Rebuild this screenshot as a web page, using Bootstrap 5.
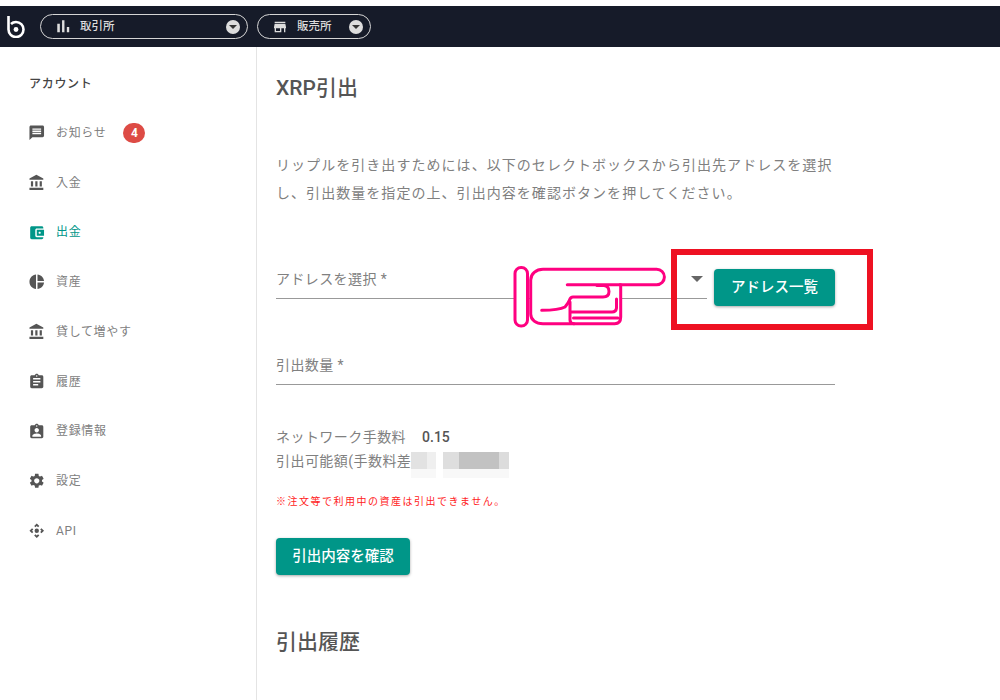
<!DOCTYPE html>
<html lang="ja">
<head>
<meta charset="UTF-8">
<title>XRP引出</title>
<link href="https://cdn.jsdelivr.net/npm/bootstrap@5.3.3/dist/css/bootstrap.min.css" rel="stylesheet">
<style>
body { font-family: Roboto, "Noto Sans CJK JP", sans-serif; background: #fff; padding-top: 6px; height: 700px; overflow: hidden; color: #808080; }
.top-bar { height: 41px; background: #161b29; padding-left: 7px; }
.logo-mark { width: 18px; height: 23px; margin-right: 15px; }
.market-pill { height: 25px; border: 1px solid #d5d5d5; border-radius: 13px; color: #ddd; font-size: 11.5px; font-weight: 500; padding: 0 7px 0 14px; }
.pill-wide { width: 208px; margin-right: 9px; }
.pill-short { width: 114px; }
.pill-icon { width: 16px; height: 16px; fill: #ddd; margin-right: 9px; flex: none; }
.pill-icon-bars { width: 20.5px; height: 20.5px; margin-left: -2.3px; margin-right: 6.8px; }
.pill-arrow { width: 14px; height: 14px; border-radius: 50%; background: #ddd; margin-left: auto; }
.pill-arrow::after { content: ""; border: 4px solid transparent; border-top: 4px solid #333; border-bottom: 0; }
.page-body { height: 653px; }
.side-menu { width: 257px; border-right: 1px solid #e4e4e4; padding: 28px 0 0 29px; flex: none; }
.side-title { font-size: 12px; font-weight: 500; letter-spacing: .7px; color: #444; height: 18px; line-height: 18px; margin-bottom: 15px; }
.side-item { height: 49.75px; font-size: 12px; letter-spacing: .65px; color: #808080; }
.side-item svg { width: 17.5px; height: 17.5px; fill: #555; margin-left: -1.5px; margin-right: 11px; flex: none; }
.side-item.is-current { color: #009688; }
.side-item.is-current svg { fill: #009688; }
.count-badge { width: 22px; height: 20px; border-radius: 10px; background: #dd4b45; color: #fff; font-size: 12px; font-weight: 700; margin-left: 17px; letter-spacing: 0; }
.main-pane { padding-left: 19px; width: 598px; flex: none; }
.page-heading { font-size: 21px; font-weight: 500; color: #555; line-height: 30px; margin: 0; }
.title-top { margin-top: 26px; }
.intro-text { font-size: 14px; letter-spacing: 1.05px; line-height: 28px; color: #808080; margin: 48px 0 0; width: 570px; }
.addr-row { margin-top: 62px; height: 78px; }
.addr-field { width: 431px; height: 39px; border-bottom: 1px solid #999; font-size: 14px; letter-spacing: .4px; margin-top: -9px; margin-right: 7px; }
.drop-caret { position: absolute; left: 415px; top: 7px; border: 6px solid transparent; border-top: 6px solid #666; border-bottom: 0; }
.teal-btn { background: #009688; color: #fff; border: 0; border-radius: 4px; font-size: 14.5px; font-weight: 500; height: 37px; box-shadow: 0 1px 3px rgba(0,0,0,.35); padding: 0; }
.teal-btn:hover { background: #00897b; color: #fff; }
.list-btn { width: 121px; }
.amount-field { width: 559px; height: 38px; border-bottom: 1px solid #999; font-size: 14px; letter-spacing: .4px; }
.info-block { margin-top: 40px; font-size: 14px; letter-spacing: .45px; line-height: 24px; }
.info-val { font-weight: 500; color: #555; margin-left: 16px; letter-spacing: 0; }
.blur-one, .blur-two { display: inline-block; height: 26px; vertical-align: top; margin-top: 3px; margin-bottom: -5px; background-repeat: no-repeat; background-size: 100% 17px, 100% 100%; }
.blur-one { width: 25px; background-image: linear-gradient(90deg, #e2e2e2 0 16px, #efefef 16px), linear-gradient(#f8f8f8, #f8f8f8); }
.blur-two { width: 66px; margin-left: 7px; background-image: linear-gradient(90deg, #dedede 0 16px, #c2c2c2 16px 56px, #dcdcdc 56px), linear-gradient(#f8f8f8, #f8f8f8); }
.warn-text { font-size: 10px; letter-spacing: 1.5px; color: #f22; margin: 21px 0 0; line-height: 16px; }
.confirm-btn { width: 134px; margin-top: 28px; display: block; }
.history-heading { margin-top: 52px; }
.red-frame { position: absolute; left: 414px; top: 202px; width: 202px; height: 81px; border: 6px solid #ee1122; }
.hand-mark { position: absolute; left: 256px; top: 219px; width: 155px; height: 62px; fill: #fff; stroke: #ff0080; stroke-width: 3; }
</style>
</head>
<body>

<nav class="top-bar d-flex align-items-center">
    <svg class="logo-mark" viewBox="0 0 18 23" fill="none" stroke="#fff" stroke-width="2.6">
        <path d="M1.500 1v13.500a7.500 7.500 0 1 0 7.500-7.500c-2 0-3.800 .8-5 2"/>
        <circle cx="9" cy="14.500" r="2.400" fill="#fff" stroke="none"/>
    </svg>
    <div class="market-pill pill-wide d-flex align-items-center">
        <svg class="pill-icon pill-icon-bars" viewBox="0 0 24 24"><path d="M5 9.200h3V19H5zM10.600 5h2.800v14h-2.800zm5.600 8H19v6h-2.800z"/></svg>
        <span>取引所</span>
        <span class="pill-arrow d-flex align-items-center justify-content-center"></span>
    </div>
    <div class="market-pill pill-short d-flex align-items-center">
        <svg class="pill-icon" viewBox="0 0 24 24"><path d="M20 4H4v2h16V4zm1 10v-2l-1-5H4l-1 5v2h1v6h10v-6h4v6h2v-6h1zm-9 4H6v-4h6v4z"/></svg>
        <span>販売所</span>
        <span class="pill-arrow d-flex align-items-center justify-content-center"></span>
    </div>
</nav>

<div class="page-body d-flex">
    <aside class="side-menu">
        <div class="side-title">アカウント</div>
        <div class="side-item d-flex align-items-center">
            <svg viewBox="0 0 24 24"><path d="M20 2H4c-1.100 0-1.990.9-1.990 2L2 22l4-4h14c1.100 0 2-.9 2-2V4c0-1.100-.9-2-2-2zm-2 12H6v-2h12v2zm0-3H6V9h12v2zm0-3H6V6h12v2z"/></svg>
            <span>お知らせ</span>
            <span class="count-badge d-flex align-items-center justify-content-center">4</span>
        </div>
        <div class="side-item d-flex align-items-center">
            <svg viewBox="0 0 24 24"><path d="M4 10v7h3v-7H4zm6 0v7h3v-7h-3zM2 22h19v-3H2v3zm14-12v7h3v-7h-3zm-4.500-9L2 6v2h19V6l-9.500-5z"/></svg>
            <span>入金</span>
        </div>
        <div class="side-item is-current d-flex align-items-center">
            <svg viewBox="0 0 24 24"><path d="M21 18v1c0 1.100-.9 2-2 2H5c-1.110 0-2-.9-2-2V5c0-1.100.89-2 2-2h14c1.100 0 2 .9 2 2v1h-9c-1.110 0-2 .9-2 2v8c0 1.100.89 2 2 2h9zm-9-2h10V8H12v8zm4-2.500c-.83 0-1.500-.67-1.500-1.500s.67-1.500 1.500-1.500 1.500.67 1.500 1.500-.67 1.500-1.500 1.500z"/></svg>
            <span>出金</span>
        </div>
        <div class="side-item d-flex align-items-center">
            <svg viewBox="0 0 24 24"><path d="M11 2v20c-5.070-.5-9-4.790-9-10s3.930-9.500 9-10zm2.030 0v8.990H22c-.47-4.740-4.240-8.520-8.970-8.990zm0 11.010V22c4.740-.47 8.500-4.250 8.970-8.990h-8.970z"/></svg>
            <span>資産</span>
        </div>
        <div class="side-item d-flex align-items-center">
            <svg viewBox="0 0 24 24"><path d="M4 10v7h3v-7H4zm6 0v7h3v-7h-3zM2 22h19v-3H2v3zm14-12v7h3v-7h-3zm-4.500-9L2 6v2h19V6l-9.500-5z"/></svg>
            <span>貸して増やす</span>
        </div>
        <div class="side-item d-flex align-items-center">
            <svg viewBox="0 0 24 24"><path d="M19 3h-4.180C14.400 1.840 13.300 1 12 1c-1.300 0-2.400.84-2.820 2H5c-1.100 0-2 .9-2 2v14c0 1.100.9 2 2 2h14c1.100 0 2-.9 2-2V5c0-1.100-.9-2-2-2zm-7 0c.55 0 1 .45 1 1s-.45 1-1 1-1-.45-1-1 .45-1 1-1zm2 14H7v-2h7v2zm3-4H7v-2h10v2zm0-4H7V7h10v2z"/></svg>
            <span>履歴</span>
        </div>
        <div class="side-item d-flex align-items-center">
            <svg viewBox="0 0 24 24"><path d="M19 3h-4.180C14.400 1.840 13.300 1 12 1c-1.300 0-2.400.84-2.820 2H5c-1.100 0-2 .9-2 2v14c0 1.100.9 2 2 2h14c1.100 0 2-.9 2-2V5c0-1.100-.9-2-2-2zm-7 0c.55 0 1 .45 1 1s-.45 1-1 1-1-.45-1-1 .45-1 1-1zm0 4c1.660 0 3 1.340 3 3s-1.340 3-3 3-3-1.340-3-3 1.340-3 3-3zm6 12H6v-1.400c0-2 4-3.100 6-3.100s6 1.100 6 3.100V19z"/></svg>
            <span>登録情報</span>
        </div>
        <div class="side-item d-flex align-items-center">
            <svg viewBox="0 0 24 24"><path d="M19.140 12.940c.04-.3.06-.61.06-.94 0-.32-.02-.64-.07-.94l2.030-1.580c.18-.14.23-.41.12-.61l-1.920-3.320c-.12-.22-.37-.29-.59-.22l-2.390.96c-.5-.38-1.030-.7-1.620-.94l-.36-2.540c-.04-.24-.24-.41-.48-.41h-3.840c-.24 0-.43.17-.47.41l-.36 2.540c-.59.24-1.130.57-1.620.94l-2.390-.96c-.22-.08-.47 0-.59.22L2.740 8.870c-.12.21-.08.47.12.61l2.030 1.580c-.05.3-.09.63-.09.94s.02.64.07.94l-2.030 1.580c-.18.14-.23.41-.12.61l1.920 3.320c.12.22.37.29.59.22l2.390-.96c.5.38 1.030.7 1.620.94l.36 2.540c.05.24.24.41.48.41h3.840c.24 0 .44-.17.47-.41l.36-2.540c.59-.24 1.130-.56 1.620-.94l2.390.96c.22.08.47 0 .59-.22l1.920-3.320c.12-.22.07-.47-.12-.61l-2.010-1.580zM12 15.600c-1.980 0-3.600-1.620-3.600-3.600s1.620-3.600 3.600-3.600 3.600 1.620 3.600 3.600-1.620 3.600-3.600 3.600z"/></svg>
            <span>設定</span>
        </div>
        <div class="side-item d-flex align-items-center">
            <svg viewBox="0 0 24 24"><path d="M15.540 5.540L13.770 7.300 12 5.540 10.230 7.300 8.460 5.540 12 2l3.540 3.540zm2.920 10l-1.760-1.770L18.460 12l-1.760-1.770 1.760-1.770L22 12l-3.540 3.540zm-10 2.920l1.770-1.760L12 18.460l1.770-1.760 1.770 1.760L12 22l-3.540-3.540zm-2.920-10l1.760 1.770L5.540 12l1.760 1.770-1.760 1.770L2 12l3.540-3.540z"/><circle cx="12" cy="12" r="3"/></svg>
            <span>API</span>
        </div>
    </aside>

    <main class="main-pane position-relative">
        <h1 class="page-heading title-top">XRP引出</h1>
        <p class="intro-text">リップルを引き出すためには、以下のセレクトボックスから引出先アドレスを選択し、引出数量を指定の上、引出内容を確認ボタンを押してください。</p>

        <div class="addr-row position-relative d-flex align-items-start">
            <div class="addr-field d-flex align-items-center">アドレスを選択 *</div>
            <span class="drop-caret"></span>
            <button type="button" class="btn teal-btn list-btn">アドレス一覧</button>
        </div>
        <div class="amount-field d-flex align-items-center">引出数量 *</div>

        <div class="info-block">
            <div>ネットワーク手数料<span class="info-val">0.15</span></div>
            <div>引出可能額(手数料差<span class="blur-one"></span><span class="blur-two"></span></div>
        </div>
        <p class="warn-text">※注文等で利用中の資産は引出できません。</p>
        <button type="button" class="btn teal-btn confirm-btn">引出内容を確認</button>
        <h2 class="page-heading history-heading">引出履歴</h2>

        <div class="red-frame"></div>
        <svg class="hand-mark" viewBox="0 0 155 62" stroke-linecap="round">
            <rect x="2" y="1.500" width="12.500" height="58.500" rx="6"/>
            <path d="M30 3.300H143.700a7.700 7.700 0 0 1 0 15.400H107.700V51q0 6.700-6 6.700H30C23 57.700 17.700 54 17.700 48V14C17.700 8 23 3.300 30 3.300z"/>
            <path d="M54.300 18.700H107.700" fill="none"/>
            <path d="M84 19.500H91q5 .5 5 6t-6 5.500H60q-2.500 0-3.500 3T52 41q-6 3.300-23.300 3.300" fill="none"/>
            <path d="M57 36v18q0 3.700 4 3.700M57 46H99q4 0 4.500-4V33M60.500 52H105" fill="none"/>
        </svg>
    </main>
</div>

<script src="https://cdn.jsdelivr.net/npm/bootstrap@5.3.3/dist/js/bootstrap.bundle.min.js"></script>
</body>
</html>
